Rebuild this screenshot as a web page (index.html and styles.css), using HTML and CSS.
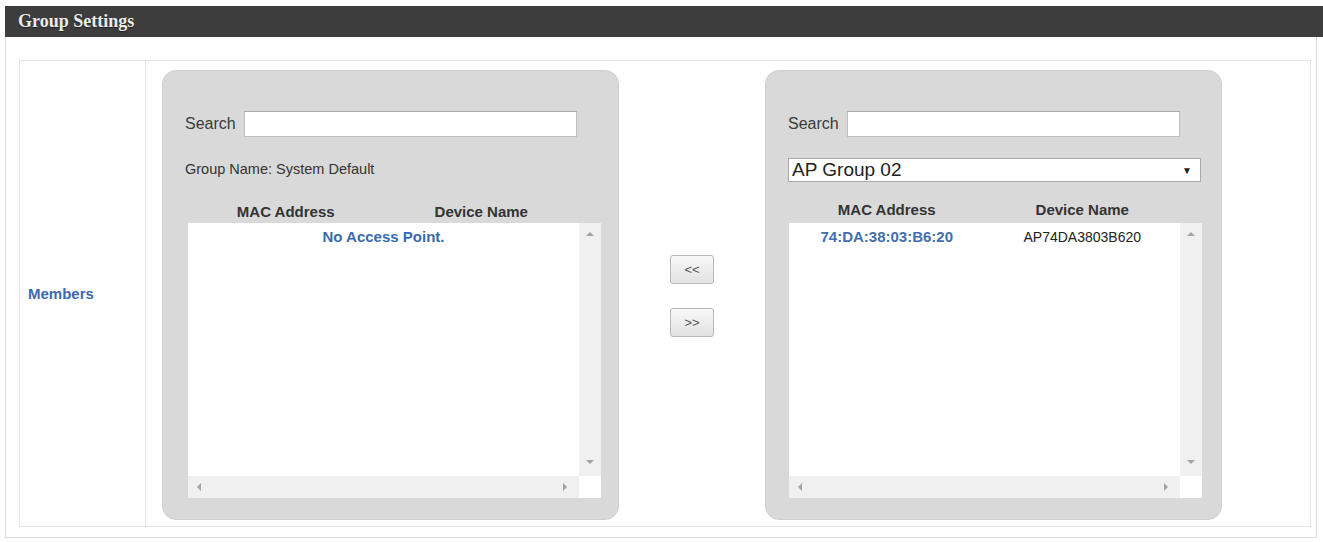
FILE: index.html
```html
<!DOCTYPE html>
<html lang="en">
<head>
  <meta charset="UTF-8">
  <meta name="viewport" content="width=device-width, initial-scale=1.0">
  <title>Group Settings</title>
  <link rel="stylesheet" href="styles.css">
</head>
<body>
  <div class="page">
    <div class="title-bar">Group Settings</div>

    <div class="settings-box">
      <div class="settings-table">
        <div class="label-cell">Members</div>

        <div class="content-cell">
          <!-- left: devices of the current group -->
          <div class="panel">
            <div class="search-row">
              <label class="search-label">Search</label>
              <input type="text" class="search-input">
            </div>
            <div class="group-name">Group Name: System Default</div>
            <div class="list-head">
              <span>MAC Address</span>
              <span>Device Name</span>
            </div>
            <div class="list-box">
              <div class="list-main">
                <div class="list-rows">
                  <div class="empty-row">No Access Point.</div>
                </div>
                <div class="vscroll"><i class="arr up"></i><i class="arr down"></i></div>
              </div>
              <div class="hscroll-row">
                <div class="hscroll"><i class="arr left"></i><i class="arr right"></i></div>
                <div class="corner"></div>
              </div>
            </div>
          </div>

          <div class="move-btns">
            <button class="btn">&lt;&lt;</button>
            <button class="btn">&gt;&gt;</button>
          </div>

          <!-- right: chosen group -->
          <div class="panel">
            <div class="search-row">
              <label class="search-label">Search</label>
              <input type="text" class="search-input">
            </div>
            <div class="group-select">
              <span>AP Group 02</span>
              <span class="select-arrow">&#9660;</span>
            </div>
            <div class="list-head head-right">
              <span>MAC Address</span>
              <span>Device Name</span>
            </div>
            <div class="list-box">
              <div class="list-main">
                <div class="list-rows">
                  <div class="row">
                    <span class="mac">74:DA:38:03:B6:20</span>
                    <span class="dev">AP74DA3803B620</span>
                  </div>
                </div>
                <div class="vscroll"><i class="arr up"></i><i class="arr down"></i></div>
              </div>
              <div class="hscroll-row">
                <div class="hscroll"><i class="arr left"></i><i class="arr right"></i></div>
                <div class="corner"></div>
              </div>
            </div>
          </div>
        </div>
      </div>
    </div>
  </div>
</body>
</html>
```

FILE: styles.css
```css
body {
  margin: 0;
  padding: 0;
  background-color: #fff;
  font-family: "Liberation Sans", Arial, sans-serif;
  color: #333;
}

.page {
  padding: 6px 0 0 5px;
}

.title-bar {
  height: 31px;
  line-height: 30px;
  padding-left: 13px;
  background-color: #3d3d3d;
  color: #ececec;
  font-family: "Liberation Serif", "Times New Roman", serif;
  font-weight: bold;
  font-size: 18px;
  text-shadow: 0 1px 1px rgba(0,0,0,0.5);
}

.settings-box {
  width: 1292px;
  padding: 23px 5px 10px 13px;
  border: 1px solid #dcdcdc;
  border-top: none;
}

.settings-table {
  display: flex;
  height: 465px;
  border: 1px solid #e4e4e4;
}

.label-cell {
  width: 117px;
  padding-left: 8px;
  border-right: 1px solid #e4e4e4;
  display: flex;
  align-items: center;
  color: #3a6aae;
  font-weight: bold;
  font-size: 15px;
}

.content-cell {
  display: flex;
  padding: 9px 0 5px 16px;
}

.panel {
  width: 457px;
  height: 450px;
  box-sizing: border-box;
  padding: 40px 0 0 22px;
  background-color: #d9d9d9;
  border: 1px solid #d0d0d0;
  border-radius: 14px;
}

.search-row {
  display: flex;
  align-items: center;
  gap: 8px;
}

.search-label {
  font-size: 16px;
  color: #3a3a3a;
}

.search-input {
  width: 333px;
  height: 26px;
  box-sizing: border-box;
  margin: 0;
  border: 1px solid #bdbdbd;
  border-top-color: #a9a9a9;
  background-color: #fff;
}

.group-name {
  margin-top: 23px;
  font-size: 14.5px;
  line-height: 18px;
  color: #333;
}

.group-select {
  display: flex;
  justify-content: space-between;
  align-items: center;
  width: 413px;
  height: 24px;
  box-sizing: border-box;
  margin-top: 21px;
  padding: 0 8px 0 3px;
  background-color: #fff;
  border: 1px solid #a9a9a9;
  font-size: 19px;
  color: #222;
}

.select-arrow {
  font-size: 10px;
  color: #222;
}

.list-head {
  display: flex;
  width: 391px;
  margin: 25px 0 2px 3px;
  font-weight: bold;
  font-size: 15px;
  line-height: 18px;
  color: #333;
}

.head-right {
  margin: 19px 0 4px 1px;
}

.list-head span {
  flex: 1;
  text-align: center;
}

.list-box {
  width: 413px;
  height: 275px;
  margin-left: 3px;
  display: flex;
  flex-direction: column;
  background-color: #fff;
}

.head-right + .list-box {
  margin-left: 1px;
}

.list-main {
  flex: 1;
  display: flex;
}

.list-rows {
  flex: 1;
  padding-top: 5px;
}

.empty-row {
  text-align: center;
  font-weight: bold;
  font-size: 15px;
  line-height: 18px;
  color: #3a6aae;
}

.row {
  display: flex;
  font-size: 14px;
  line-height: 18px;
}

.row span {
  flex: 1;
  text-align: center;
}

.row .mac {
  color: #3f6fb0;
  font-weight: bold;
  font-size: 15px;
}

.row .dev {
  color: #222;
}

.vscroll {
  width: 22px;
  background-color: #f0f0f0;
  display: flex;
  flex-direction: column;
  justify-content: space-between;
  align-items: center;
  padding: 9px 0 12px;
  box-sizing: border-box;
}

.hscroll-row {
  height: 22px;
  display: flex;
}

.hscroll {
  flex: 1;
  background-color: #f0f0f0;
  display: flex;
  justify-content: space-between;
  align-items: center;
  padding: 0 12px 0 9px;
}

.corner {
  width: 22px;
  background-color: #fff;
}

.arr {
  width: 0;
  height: 0;
  border: 4px solid transparent;
}

.arr.up {
  border-bottom-color: #a3a3a3;
  border-top-width: 0;
}

.arr.down {
  border-top-color: #a3a3a3;
  border-bottom-width: 0;
}

.arr.left {
  border-right-color: #a3a3a3;
  border-left-width: 0;
}

.arr.right {
  border-left-color: #a3a3a3;
  border-right-width: 0;
}

.move-btns {
  width: 146px;
  display: flex;
  flex-direction: column;
  justify-content: center;
  align-items: center;
  gap: 24px;
}

.btn {
  width: 44px;
  height: 29px;
  padding: 0;
  border: 1px solid #b8b8b8;
  border-radius: 3px;
  background: linear-gradient(#f8f8f8, #e2e2e2);
  font-family: "Liberation Sans", Arial, sans-serif;
  font-size: 13px;
  color: #555;
  cursor: pointer;
}

.btn:hover {
  background: linear-gradient(#ffffff, #e8e8e8);
}
```
